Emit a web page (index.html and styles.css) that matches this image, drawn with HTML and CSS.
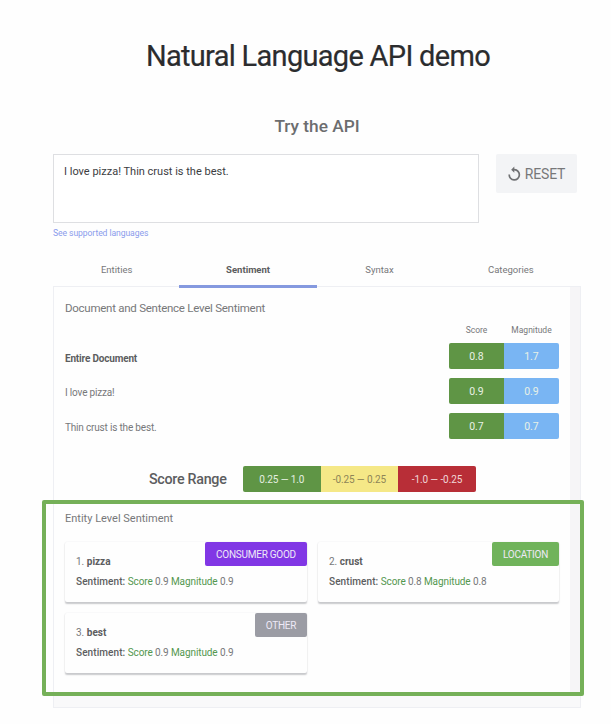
FILE: index.html
```html
<!DOCTYPE html>
<html lang="en">
<head>
<meta charset="utf-8">
<title>Natural Language API demo</title>
<link rel="stylesheet" href="styles.css">
</head>
<body>
<main class="page">
  <h1 class="title"><span>Natural Language API demo</span></h1>
  <h2 class="subtitle"><span>Try the API</span></h2>
  <div class="input-row">
    <div class="input"><span>I love pizza! Thin crust is the best.</span></div>
    <button class="reset">
      <svg width="13" height="16" viewBox="0 0 13 16" fill="none" stroke="#707173" stroke-width="1.7"><path d="M1.2 8.5a5.1 5.1 0 1 0 5.3-4.8H4.8"/><path d="M6.3.6 3.2 3.7l3.1 3.1z" fill="#707173" stroke="none"/></svg>
      <span>RESET</span>
    </button>
  </div>
  <a class="languages"><span>See supported languages</span></a>
  <nav class="tabs">
    <div class="tab"><span>Entities</span></div>
    <div class="tab active"><span>Sentiment</span></div>
    <div class="tab"><span>Syntax</span></div>
    <div class="tab"><span>Categories</span></div>
  </nav>
  <section class="panel">
    <div class="content">
      <h3 class="heading doc-heading"><span>Document and Sentence Level Sentiment</span></h3>
      <div class="columns"><span>Score</span><span>Magnitude</span></div>
      <div class="row total"><span class="label">Entire Document</span><span class="cell good">0.8</span><span class="cell magnitude">1.7</span></div>
      <div class="row"><span class="label">I love pizza!</span><span class="cell good">0.9</span><span class="cell magnitude">0.9</span></div>
      <div class="row"><span class="label">Thin crust is the best.</span><span class="cell good">0.7</span><span class="cell magnitude">0.7</span></div>
      <div class="range">
        <span class="range-label">Score Range</span>
        <span class="step good">0.25 — 1.0</span><span class="step neutral">-0.25 — 0.25</span><span class="step bad">-1.0 — -0.25</span>
      </div>
      <h3 class="heading entity-heading"><span>Entity Level Sentiment</span></h3>
      <div class="cards">
        <article class="card">
          <span class="badge consumer">CONSUMER GOOD</span>
          <p class="name">1. <b>pizza</b></p>
          <p class="sentiment"><b>Sentiment:</b> <i>Score</i> 0.9 <i>Magnitude</i> 0.9</p>
        </article>
        <article class="card">
          <span class="badge location">LOCATION</span>
          <p class="name">2. <b>crust</b></p>
          <p class="sentiment"><b>Sentiment:</b> <i>Score</i> 0.8 <i>Magnitude</i> 0.8</p>
        </article>
        <article class="card">
          <span class="badge other">OTHER</span>
          <p class="name">3. <b>best</b></p>
          <p class="sentiment"><b>Sentiment:</b> <i>Score</i> 0.9 <i>Magnitude</i> 0.9</p>
        </article>
      </div>
    </div>
    <div class="highlight"></div>
  </section>
</main>
</body>
</html>
```
FILE: styles.css
```css
* { box-sizing: border-box; }
body { margin: 0; background: #fefefe; color: #77787a; font-family: Roboto, "Liberation Sans", sans-serif; }
h1, h2, h3, p { margin: 0; font-weight: 400; }
.page { width: 611px; height: 724px; padding: 36px 30px 0 53px; overflow: hidden; }
.title { height: 40px; margin: 0 -4px 0 -2px; text-align: center; font-size: 29px; line-height: 40px; color: #2b2c2e; white-space: nowrap; letter-spacing: -.7px; -webkit-text-stroke: .2px #2b2c2e; }
.subtitle { height: 24px; margin-top: 38px; text-align: center; font-size: 17.3px; line-height: 24px; font-weight: 500; color: #6c6d6f; }
.input-row { display: flex; gap: 17px; margin-top: 16px; align-items: flex-start; }
.input { width: 426px; height: 69px; border: 1px solid #dedfe2; padding: 8px 10px; font-size: 11px; line-height: 17px; color: #3c3d3f; background: #fff; }
.reset { width: 81px; height: 39px; padding: 0; display: flex; align-items: center; justify-content: center; gap: 4px; border: 0; border-radius: 2px; background: #f3f4f6; color: #77787a; font: 14px Roboto, sans-serif; letter-spacing: -.15px; }
.languages { display: block; height: 12px; margin-top: 4px; font-size: 8.6px; line-height: 12px; color: #8a9cec; letter-spacing: -.08px; }
.tabs { display: grid; grid-template-columns: repeat(4, 131.4px); height: 36px; margin: 13px 0 0 -2px; }
.tab { display: flex; justify-content: center; font-size: 9.5px; line-height: 35px; height: 36px; }
.active { margin: 0 -3.5px; font-weight: 700; color: #5c5d60; border-bottom: 3px solid #8599df; position: relative; z-index: 1; }
.panel { position: relative; height: 422px; width: 528px; margin-top: -2px; padding: 0 21px 0 11px; border: 1px solid #eeeff3; background: linear-gradient(#f9f9fa, #f9f9fa) bottom / 100% 12px no-repeat, linear-gradient(to right, transparent 516px, #f6f5f7 516px); }
.heading { font-size: 12px; line-height: 18px; }
.doc-heading { margin-top: 12px; height: 18px; font-size: 11.5px; letter-spacing: -.26px; }
.columns { display: flex; justify-content: flex-end; height: 12px; margin: 7px 0 7px; font-size: 8.5px; line-height: 12px; }
.columns span { width: 55px; text-align: center; }
.row { display: flex; height: 26px; margin-bottom: 9px; line-height: 27px; font-size: 10px; }
.label { flex: 1; padding-top: 1px; letter-spacing: -.18px; }
.total .label { padding-top: 2px; font-weight: 700; color: #5c5d60; }
.cell { width: 55px; text-align: center; color: #e8f1e6; font-size: 10.5px; border-radius: 2px 0 0 2px; }
.magnitude { border-radius: 0 2px 2px 0; }
.good { background: #5f9545; }
.magnitude { background: #79b5f3; }
.range { display: flex; height: 26px; margin: 27px 0 0 84px; line-height: 27px; }
.range-label { width: 94px; font-size: 14.3px; font-weight: 500; color: #5c5d60; letter-spacing: -.3px; }
.step { width: 77.6px; text-align: center; font-size: 10px; color: #e5efe0; letter-spacing: -.1px; }
.range .good { border-radius: 2px 0 0 2px; }
.neutral { background: #f5e887; color: #8e8557; }
.bad { background: #b82e37; color: #f0d6d8; border-radius: 0 2px 2px 0; }
.entity-heading { margin-top: 18px; height: 18px; font-size: 11px; }
.cards { display: grid; grid-template-columns: 242px 241px; gap: 11px; margin-top: 14px; }
.card { position: relative; height: 60px; padding: 11px 11px 0; border-radius: 2px; background: #fefefe; box-shadow: 0 1.5px 1.5px #c8c9cc, 0 0 2px #f0f0f2; font-size: 10px; line-height: 18px; }
.card b { font-weight: 500; color: #5c5d60; }
.card .name b { font-weight: 700; }
.sentiment { margin-top: 2px; white-space: nowrap; letter-spacing: -.1px; }
.sentiment b { letter-spacing: .08px; }
.sentiment i { font-style: normal; color: #53974e; }
.badge { position: absolute; top: 0; right: 0; height: 24px; line-height: 25px; text-align: center; font-size: 10px; color: #eee9f7; border-radius: 2px; letter-spacing: -.25px; }
.consumer { width: 102px; background: #8137e5; }
.location { width: 67px; background: #70b35b; }
.other { width: 52px; background: #9b9ca4; }
.highlight { position: absolute; left: -12px; top: 213px; width: 542px; height: 196px; border: 4px solid #75b058; border-radius: 2px; }
```
